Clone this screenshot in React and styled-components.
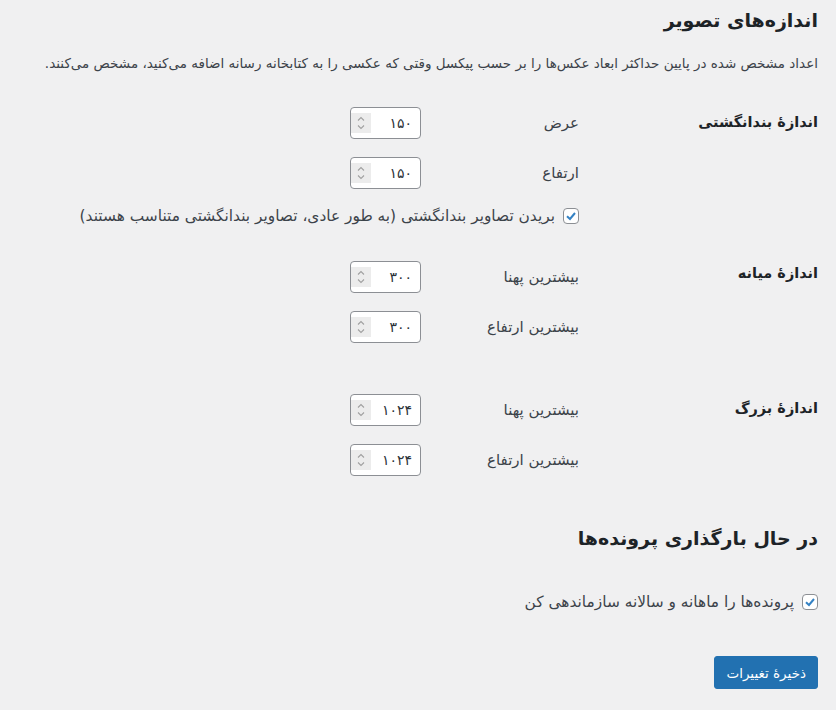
import React from 'react';
import styled, { createGlobalStyle } from 'styled-components';

const GlobalStyle = createGlobalStyle`
  html, body {
    margin: 0;
    padding: 0;
    background: #f0f0f1;
  }
  body {
    font-family: "DejaVu Sans", sans-serif;
    color: #3c434a;
    font-size: 14px;
  }
`;

const Wrap = styled.div`
  direction: rtl;
  padding: 5px 18px 20px 20px;
`;

const Title = styled.h2`
  margin: ${(p) => p.$top || 0}px 0 0;
  font-size: 19px;
  line-height: 30px;
  font-weight: 700;
  color: #1d2327;
`;

const Description = styled.p`
  margin: 18px 0 0;
  font-size: 13.5px;
  line-height: 20px;
  color: #3c434a;
`;

const Section = styled.div`
  display: grid;
  grid-template-columns: 239px 1fr;
  margin-top: ${(p) => p.$top}px;
`;

const SectionLabel = styled.div`
  font-size: 14.5px;
  font-weight: 700;
  color: #1d2327;
  line-height: 32px;
  margin-top: ${(p) => p.$shift || 0}px;
`;

const Fields = styled.div`
  display: flex;
  flex-direction: column;
  gap: 18px;
`;

const FieldRow = styled.div`
  display: flex;
  align-items: center;
`;

const FieldLabel = styled.span`
  width: 158px;
  font-size: 15px;
  color: #3c434a;
`;

const NumberBox = styled.div`
  width: 71px;
  height: 32px;
  box-sizing: border-box;
  border: 1px solid #8c8f94;
  border-radius: 4px;
  background: #fff;
  display: flex;
  align-items: center;
  justify-content: space-between;
  padding: 0 8px 0 0;
  font-size: 14px;
  color: #2c3338;
`;

const Spinner = styled.span`
  width: 20px;
  height: 20px;
  background: #ececec;
  display: flex;
  align-items: center;
  justify-content: center;
`;

const CheckLine = styled.label`
  display: flex;
  align-items: center;
  gap: 8px;
  font-size: 15.4px;
  line-height: 20px;
  color: #3c434a;
  margin-top: ${(p) => p.$top || 0}px;
`;

const Box = styled.span`
  width: 16px;
  height: 16px;
  box-sizing: border-box;
  border: 1px solid #8c8f94;
  border-radius: 4px;
  background: #fff;
  display: flex;
  align-items: center;
  justify-content: center;
  flex-shrink: 0;
`;

const SaveButton = styled.button`
  margin-top: 44px;
  height: 33px;
  padding: 0 11px;
  border: 1px solid #2271b1;
  border-radius: 3px;
  background: #2271b1;
  color: #fff;
  font-family: "DejaVu Sans", sans-serif;
  font-size: 13.5px;
`;

const SpinIcon = () => (
  <Spinner>
    <svg width="10" height="16" viewBox="0 0 10 16" fill="none" stroke="#a0a0a0" strokeWidth="1.1">
      <path d="M2 5.5 L5 2.5 L8 5.5" />
      <path d="M2 10.5 L5 13.5 L8 10.5" />
    </svg>
  </Spinner>
);

const Checkbox = () => (
  <Box>
    <svg width="14" height="14" viewBox="0 0 14 14" fill="none" stroke="#3582c4" strokeWidth="2">
      <path d="M3 7.2 L6 10 L11 4" />
    </svg>
  </Box>
);

const Field = ({ label, value }) => (
  <FieldRow>
    <FieldLabel>{label}</FieldLabel>
    <NumberBox>
      <span>{value}</span>
      <SpinIcon />
    </NumberBox>
  </FieldRow>
);

export default function App() {
  return (
    <>
      <GlobalStyle />
      <Wrap>
        <Title>اندازه‌های تصویر</Title>
        <Description>
          اعداد مشخص شده در پایین حداکثر ابعاد عکس‌ها را بر حسب پیکسل وقتی که عکسی را به کتابخانه رسانه اضافه می‌کنید، مشخص می‌کنند.
        </Description>

        <Section $top={34}>
          <SectionLabel $shift={-1}>اندازهٔ بندانگشتی</SectionLabel>
          <Fields>
            <Field label="عرض" value="۱۵۰" />
            <Field label="ارتفاع" value="۱۵۰" />
          </Fields>
        </Section>
        <Section $top={0}>
          <div />
          <CheckLine $top={17}>
            <Checkbox />
            بریدن تصاویر بندانگشتی (به طور عادی، تصاویر بندانگشتی متناسب هستند)
          </CheckLine>
        </Section>

        <Section $top={35}>
          <SectionLabel $shift={-4}>اندازهٔ میانه</SectionLabel>
          <Fields>
            <Field label="بیشترین پهنا" value="۳۰۰" />
            <Field label="بیشترین ارتفاع" value="۳۰۰" />
          </Fields>
        </Section>

        <Section $top={51}>
          <SectionLabel $shift={-2}>اندازهٔ بزرگ</SectionLabel>
          <Fields>
            <Field label="بیشترین پهنا" value="۱۰۲۴" />
            <Field label="بیشترین ارتفاع" value="۱۰۲۴" />
          </Fields>
        </Section>

        <Title $top={47}>در حال بارگذاری پرونده‌ها</Title>
        <CheckLine $top={39}>
          <Checkbox />
          پرونده‌ها را ماهانه و سالانه سازماندهی کن
        </CheckLine>

        <SaveButton>ذخیرهٔ تغییرات</SaveButton>
      </Wrap>
    </>
  );
}
